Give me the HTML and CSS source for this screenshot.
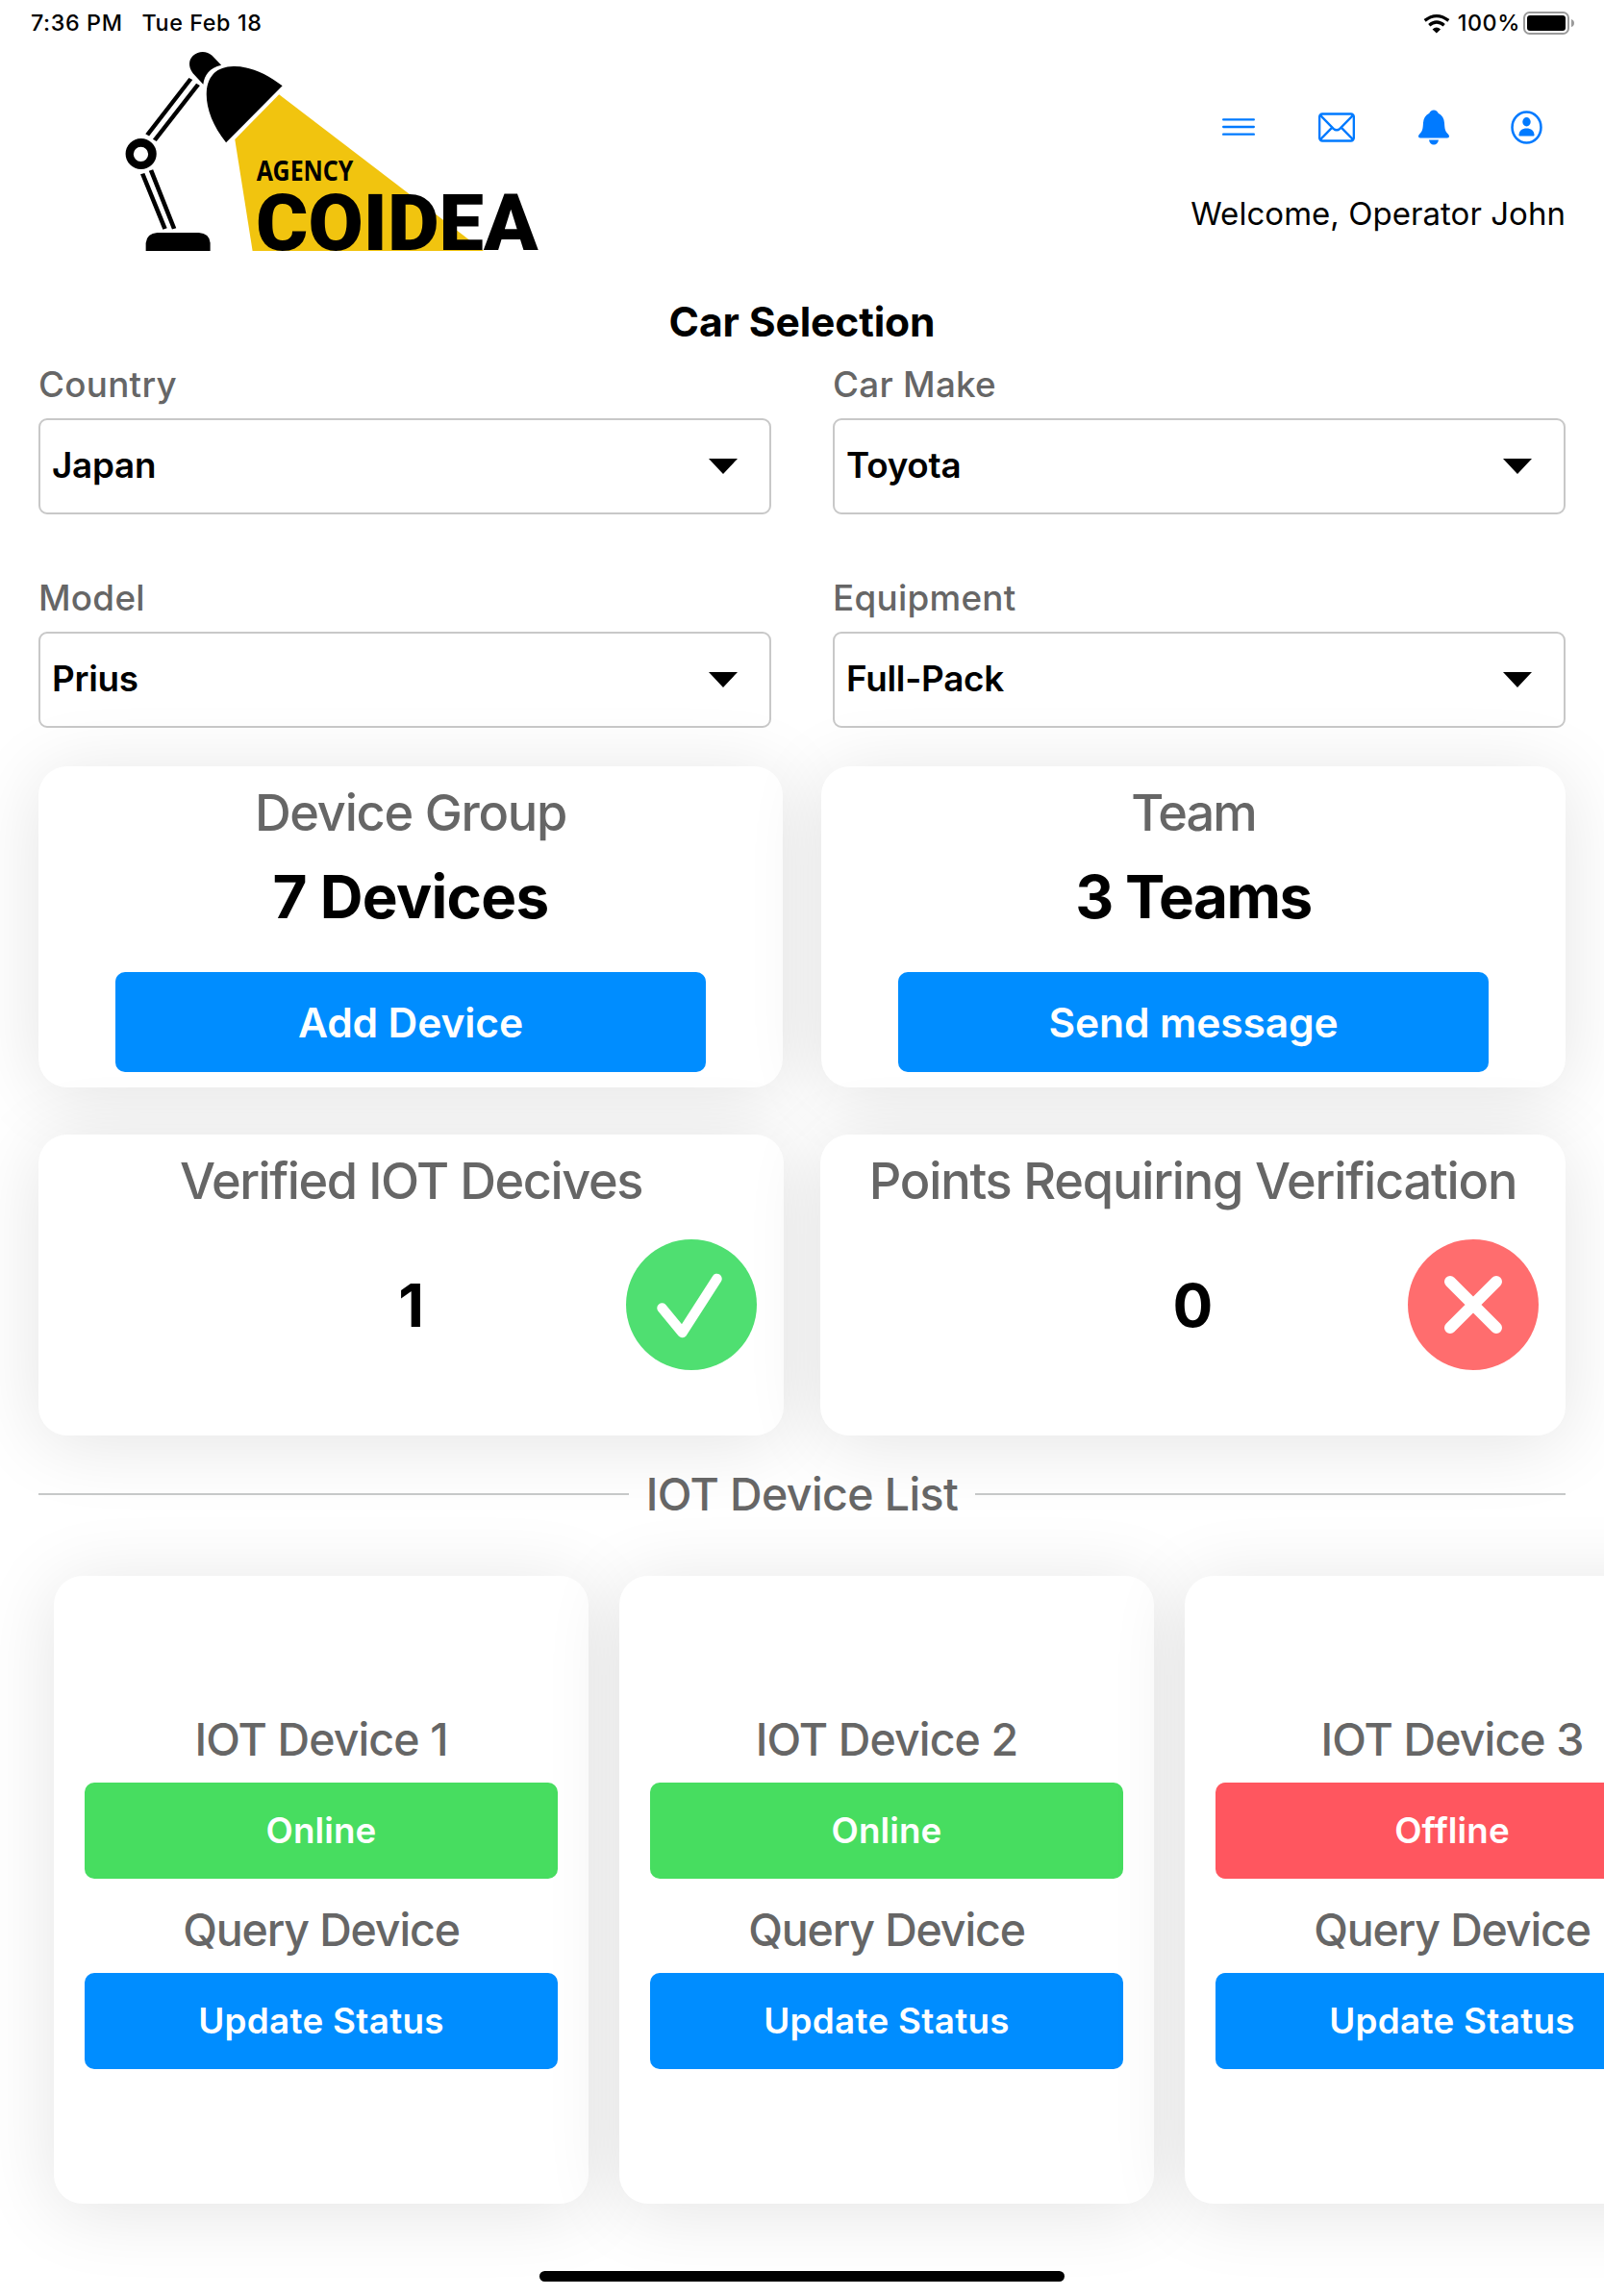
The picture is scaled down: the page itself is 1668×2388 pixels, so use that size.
FILE: index.html
```html
<!DOCTYPE html>
<html lang="en">
<head>
<meta charset="utf-8">
<title>Car Selection</title>
<link rel="stylesheet" href="styles.css">
</head>
<body>
<div class="status-bar">
  <span class="status-time">7:36 PM</span>
  <span class="status-date">Tue Feb 18</span>
  <svg class="wifi" viewBox="93 40 85 63"><path d="M98 62Q135 33 173 62" fill="none" stroke="#000" stroke-width="10"/><path d="M112 77Q135 57 159 77" fill="none" stroke="#000" stroke-width="10"/><path d="M122 90Q135 77 148 90L135 102Z"/></svg>
  <span class="status-percent">100%</span>
  <svg class="battery" viewBox="0 0 54 24"><rect x="1" y="1" width="46" height="22" rx="5.5" fill="none" stroke="#9b9b9b" stroke-width="2"/><rect x="4" y="4" width="40" height="16" rx="3" fill="#000"/><path d="M50 8Q53 9 53 12T50 16Z" fill="#9b9b9b"/></svg>
</div>

<header class="header">
  <svg class="logo" viewBox="330 150 1140 640" preserveAspectRatio="none" role="img" aria-label="Agency Coidea">
    <path fill="#f1c40f" d="M759 295L639 435L687 783H1315Z"/>
    <path d="M553 263L525 229C511 207 514 186 525 174C542 156 564 160 577 173L602 203C570 212 556 234 553 263Z"/>
    <path d="M615 445C578 392 560 335 562 288C565 236 590 208 635 207C680 206 728 232 768 268Z"/>
    <path fill="none" stroke="#000" stroke-width="12" d="M519 246L401 421M539 264L421 438M388 542L449 714M411 531L474 714"/>
    <path fill-rule="evenodd" d="M342 480a42 48 0 1 0 84 0a42 48 0 1 0 -84 0ZM363.500 481a20 23 0 1 0 40 0a20 23 0 1 0 -40 0Z"/>
    <path d="M397 783V758Q400 728 428 726H541Q570 728 572 758V783Z"/>
    <text class="logo-agency" x="698" y="565" textLength="263" lengthAdjust="spacingAndGlyphs">AGENCY</text>
    <text class="logo-name" x="696" y="780" textLength="767" lengthAdjust="spacingAndGlyphs">COIDEA</text>
  </svg>
  <div class="header-side">
    <nav class="header-nav">
      <svg class="icon-menu" viewBox="213 366 102 60"><path d="M216.500 373H311.500M216.500 396H311.500M216.500 419H311.500" stroke="#007aff" stroke-width="7" stroke-linecap="round"/></svg>
      <svg class="icon-mail" viewBox="516 350 114 92"><g fill="none" stroke="#007aff" stroke-width="7" stroke-linejoin="round"><rect x="519.500" y="354" width="107" height="84" rx="9"/><path d="M522 358L563 400Q573 409 583 400L624 358M522 434L558 397M624 434L588 397"/></g></svg>
      <svg class="icon-bell" viewBox="828 341 96 110"><path fill="#007aff" d="M876 342C883 342 888 346 890 352C902 358 908 368 909 382C910 402 912 409 920 416C926 422 925 429 918 429H834C827 429 826 422 832 416C840 409 842 402 843 382C844 368 850 358 862 352C864 346 869 342 876 342ZM861 435H891C889 445 884 450 876 450S863 445 861 435Z"/></svg>
      <svg class="icon-user" viewBox="1115 344 98 104"><ellipse cx="1164" cy="396" rx="44.500" ry="47.500" fill="none" stroke="#007aff" stroke-width="7.500"/><ellipse cx="1164" cy="379" rx="12.500" ry="14" fill="#007aff"/><path fill="#007aff" d="M1140 420C1141 406 1150 399 1164 399S1187 406 1188 420Q1188 423 1185 423H1143Q1140 423 1140 420Z"/></svg>
    </nav>
    <p class="welcome">Welcome, Operator John</p>
  </div>
</header>

<main class="content">
  <h1 class="page-title">Car Selection</h1>
  <section class="fields">
    <div><div class="field-label">Country</div><div class="select">Japan<i class="caret"></i></div></div>
    <div><div class="field-label">Car Make</div><div class="select">Toyota<i class="caret"></i></div></div>
    <div><div class="field-label">Model</div><div class="select">Prius<i class="caret"></i></div></div>
    <div><div class="field-label">Equipment</div><div class="select">Full-Pack<i class="caret"></i></div></div>
  </section>

  <section class="summary">
    <article class="card">
      <h2 class="card-title">Device Group</h2>
      <div class="card-value">7 Devices</div>
      <button class="button">Add Device</button>
    </article>
    <article class="card">
      <h2 class="card-title tight">Team</h2>
      <div class="card-value tight">3 Teams</div>
      <button class="button">Send message</button>
    </article>
  </section>

  <section class="checks">
    <article class="card">
      <h2 class="card-title verified">Verified IOT Decives</h2>
      <div class="check-row"><span class="check-count">1</span>
        <svg class="check-icon" viewBox="0 0 136 136"><circle cx="68" cy="68" r="68" fill="#4fdf71"/><path d="M37.500 71.500L58.500 97L94.500 41" fill="none" stroke="#fff" stroke-width="10.500" stroke-linecap="round" stroke-linejoin="round"/></svg>
      </div>
    </article>
    <article class="card">
      <h2 class="card-title points">Points Requiring Verification</h2>
      <div class="check-row"><span class="check-count">0</span>
        <svg class="check-icon" viewBox="0 0 136 136"><circle cx="68" cy="68" r="68" fill="#ff6d6e"/><path d="M44 44L92 92M92 44L44 92" stroke="#fff" stroke-width="12" stroke-linecap="round"/></svg>
      </div>
    </article>
  </section>

  <h2 class="divider"><span class="divider-text">IOT Device List</span></h2>

  <section class="devices">
    <article class="device">
      <h3 class="device-name">IOT Device 1</h3>
      <div class="status online">Online</div>
      <div class="device-query">Query Device</div>
      <button class="status update">Update Status</button>
    </article>
    <article class="device">
      <h3 class="device-name">IOT Device 2</h3>
      <div class="status online">Online</div>
      <div class="device-query">Query Device</div>
      <button class="status update">Update Status</button>
    </article>
    <article class="device">
      <h3 class="device-name">IOT Device 3</h3>
      <div class="status offline">Offline</div>
      <div class="device-query">Query Device</div>
      <button class="status update">Update Status</button>
    </article>
  </section>
</main>
<div class="home-indicator"></div>
</body>
</html>
```
FILE: styles.css
```css
* { box-sizing: border-box; }

body {
  position: relative;
  margin: 0;
  width: 1668px;
  height: 2388px;
  overflow: hidden;
  background: #fff;
  color: #000;
  font-family: Inter, "Liberation Sans", sans-serif;
}

h1, h2, h3, p { margin: 0; }
svg { display: block; flex: none; }

/* Status bar */
.status-bar {
  display: flex;
  align-items: center;
  height: 48px;
  padding: 0 30px 0 32px;
  font-size: 23.3px;
  font-weight: 500;
  letter-spacing: 0.6px;
  line-height: 48px;
}
.status-date { margin-left: 20px; }
.wifi { width: 28px; height: 21px; margin-left: auto; }
.status-percent { margin-left: 8px; }
.battery { width: 54px; height: 24px; margin-left: 3px; }

/* Header */
.header {
  display: flex;
  justify-content: space-between;
  height: 256px;
  padding: 2px 40px 0 126px;
}
.logo { width: 436.300px; height: 213.300px; overflow: visible; }
.logo-agency { font-family: "Noto Sans", "Open Sans", sans-serif; font-size: 84px; font-weight: 700; }
.logo-name { font-family: Roboto, Inter, sans-serif; font-size: 246px; font-weight: 900; }
.header-side { display: flex; flex-direction: column; align-items: flex-end; }
.header-nav {
  display: flex;
  align-items: center;
  gap: 66px;
  height: 164px;
  padding-right: 24px;
}
.icon-menu { width: 34px; height: 20px; }
.icon-mail { width: 38px; height: 31px; }
.icon-bell { width: 32px; height: 37px; }
.icon-user { width: 33px; height: 35px; margin-left: -2px; }
.welcome { font-size: 33px; line-height: 16px; font-weight: 400; letter-spacing: 0.04px; }

.content { padding: 0 40px; }
.page-title {
  font-size: 42.6px;
  font-weight: 700;
  line-height: 61px;
  letter-spacing: -0.14px;
  text-align: center;
}

/* Selection fields */
.fields {
  display: grid;
  grid-template-columns: 1fr 1fr;
  gap: 52px 64px;
}
.field-label {
  height: 70px;
  color: #666;
  font-size: 36.8px;
  font-weight: 500;
  letter-spacing: 0.28px;
  line-height: 69px;
}
.select {
  display: flex;
  align-items: flex-start;
  justify-content: space-between;
  height: 100px;
  padding: 0 33px 0 12px;
  border: 2px solid #c8c8c8;
  border-radius: 9px;
  font-size: 36.8px;
  font-weight: 600;
  letter-spacing: -0.25px;
  line-height: 94px;
}
.caret {
  align-self: center;
  border: 15px solid transparent;
  border-top: 16px solid #000;
  border-bottom: 0;
}

/* Summary cards */
.summary {
  display: grid;
  grid-template-columns: 1fr 1fr;
  gap: 40px;
  margin-top: 40px;
}
.card, .device {
  border-radius: 30px;
  background: #fff;
  box-shadow: 0 8px 80px rgba(0, 0, 0, 0.11);
}
.card { height: 334px; text-align: center; }
.card-title {
  color: #666;
  font-size: 52.3px;
  font-weight: 500;
  letter-spacing: -1.25px;
  line-height: 96px;
}
.card-title.tight { letter-spacing: -2px; }
.card-title.verified { letter-spacing: -1.45px; }
.card-title.points { letter-spacing: -1.2px; }
.card-value {
  font-size: 62px;
  font-weight: 700;
  letter-spacing: -0.7px;
  line-height: 79px;
}
.card-value.tight { letter-spacing: -1.5px; }
button { border: 0; font-family: inherit; }
.button {
  width: 614px;
  height: 104px;
  margin-top: 39px;
  border-radius: 10px;
  background: #008dff;
  color: #fff;
  font-size: 42.6px;
  font-weight: 600;
  letter-spacing: -0.15px;
}

/* Verification cards */
.checks {
  display: grid;
  grid-template-columns: 1fr 1fr;
  gap: 38px;
  margin-top: 49px;
}
.checks .card { height: 313px; }
.check-row {
  display: grid;
  grid-template-columns: 1fr auto 1fr;
  align-items: center;
  margin-top: 13px;
  padding: 0 28px;
}
.check-count { grid-column: 2; font-size: 62px; font-weight: 700; }
.check-icon { width: 136px; height: 136px; justify-self: end; }

/* Device list */
.divider {
  display: flex;
  align-items: center;
  height: 122px;
  color: #666;
  font-size: 46.5px;
  font-weight: 500;
  letter-spacing: -0.6px;
}
.divider::before, .divider::after {
  flex: 1;
  height: 2px;
  background: #c6c8c8;
  content: "";
}
.divider-text { width: 360px; text-align: center; }
.devices {
  display: flex;
  gap: 32px;
  padding: 24px 0 0 16px;
}
.device {
  flex: 0 0 556px;
  height: 653px;
  padding: 125px 32px 0;
  text-align: center;
}
.device-name, .device-query {
  color: #666;
  font-size: 46.5px;
  font-weight: 500;
  line-height: 90px;
}
.device-name { letter-spacing: -0.9px; }
.device-query { padding-top: 8px; letter-spacing: -1.15px; }
.status {
  display: block;
  width: 100%;
  height: 100px;
  border-radius: 10px;
  color: #fff;
  font-size: 36.8px;
  font-weight: 600;
  letter-spacing: 0.1px;
  line-height: 100px;
}
.online { background: #47dd60; }
.offline { background: #ff565f; }
.update { padding: 0; background: #008dff; letter-spacing: 0.3px; }

.home-indicator {
  position: absolute;
  bottom: 15px;
  left: 561px;
  width: 546px;
  height: 11px;
  border-radius: 6px;
  background: #000;
}
```
